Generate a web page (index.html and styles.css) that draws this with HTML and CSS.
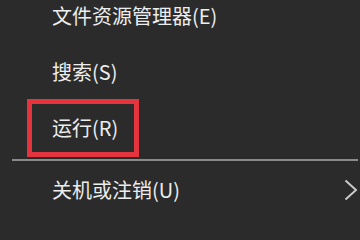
FILE: index.html
```html
<!DOCTYPE html>
<html lang="zh-CN">
<head>
<meta charset="utf-8">
<link rel="stylesheet" href="styles.css">
</head>
<body>
<div class="menu">
  <div class="item item-first"><span class="label">文件资源管理器(E)</span></div>
  <div class="item"><span class="label">搜索(S)</span></div>
  <div class="item item-marked"><span class="label">运行(R)</span><span class="highlight"></span></div>
  <div class="separator"></div>
  <div class="item item-sub">
    <span class="label">关机或注销(U)</span>
    <svg class="chevron" width="14" height="22" viewBox="0 0 14 22"><polyline points="1.5,1.5 12,11 1.5,20.5" fill="none" stroke="#c9c9c9" stroke-width="2"/></svg>
  </div>
</div>
</body>
</html>
```
FILE: styles.css
```css
html, body {
  margin: 0;
  padding: 0;
  background: #2b2b2b;
}
body {
  width: 360px;
  height: 218px;
  overflow: hidden;
  font-family: "Noto Sans CJK SC", "Microsoft YaHei", sans-serif;
  color: #ededed;
}
.menu {
  display: flex;
  flex-direction: column;
}
.item {
  box-sizing: border-box;
  height: 56px;
  display: flex;
  align-items: center;
  padding-left: 52px;
  font-size: 20px;
  line-height: 20px;
}
.item-first {
  height: 44px;
  padding-top: 6px;
  padding-bottom: 18px;
}
.item-marked {
  position: relative;
}
.highlight {
  position: absolute;
  left: 27px;
  top: -1px;
  width: 112px;
  height: 58px;
  border: 5px solid #e4343d;
  box-sizing: border-box;
}
.separator {
  height: 2px;
  margin: 3px 2px 0 12px;
  background: #8a8a8a;
}
.item-sub {
  height: 57px;
  justify-content: space-between;
  padding-right: 2px;
}
.chevron {
  display: block;
}
```
